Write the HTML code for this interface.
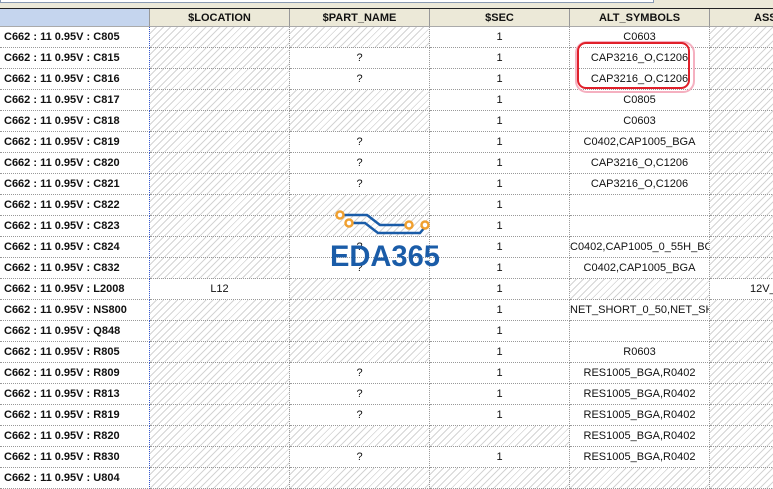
<!DOCTYPE html><html><head><style>
body{margin:0;width:773px;height:476px;overflow:hidden;background:#fff;font-family:"Liberation Sans",Arial,sans-serif;position:relative}
.top{position:absolute;left:0;top:0;width:773px;height:8px;background:#ece9d8;border-bottom:1px solid #222}
.top i{position:absolute;left:0;top:-1px;width:652px;height:3px;border:1px solid #8a9bb3;border-top:none;background:#fff}
.hd{position:absolute;top:9px;height:18px;background:#ece9d8;border-right:1px solid #999;border-bottom:1px solid #aaa;font:bold 11px "Liberation Sans",Arial,sans-serif;text-align:center;line-height:18px;box-sizing:border-box;color:#111}
.c{position:absolute;height:21px;box-sizing:border-box;border-right:1px dotted #999;border-bottom:1px dotted #999;font-size:11px;line-height:20px;text-align:center;color:#111;white-space:nowrap;overflow:hidden}
.f{font-weight:bold;text-align:left;padding-left:4px;border-right:1px dotted #3355cc}
.h{background:repeating-linear-gradient(135deg,#fff 0 4px,#d4d4d4 4px 5px)}
</style></head><body>
<div class="top"><i></i></div>
<div class="hd" style="left:0;width:150px;background:#c5d5ee"></div>
<div class="hd" style="left:150px;width:140px">$LOCATION</div>
<div class="hd" style="left:290px;width:140px">$PART_NAME</div>
<div class="hd" style="left:430px;width:140px">$SEC</div>
<div class="hd" style="left:570px;width:140px">ALT_SYMBOLS</div>
<div class="hd" style="left:710px;width:80px;text-align:left;padding-left:44px">ASS</div>
<div id="t"></div>
<svg style="position:absolute;left:330px;top:205px" width="115" height="65" viewBox="0 0 115 65">
<path d="M10 10 H37 L50 20 H80" stroke="#1a5ca8" stroke-width="2.5" fill="none"/>
<path d="M19 18 H35 L48 28 H90 L95 22" stroke="#1a5ca8" stroke-width="2.5" fill="none"/>
<circle cx="10" cy="10" r="3.5" fill="#fff" stroke="#f0a030" stroke-width="2.5"/>
<circle cx="19" cy="18" r="3.5" fill="#fff" stroke="#f0a030" stroke-width="2.5"/>
<circle cx="79" cy="20" r="3.5" fill="#fff" stroke="#f0a030" stroke-width="2.5"/>
<circle cx="95" cy="20" r="3.5" fill="#fff" stroke="#f0a030" stroke-width="2.5"/>
<text x="0" y="61" font-family="Liberation Sans,sans-serif" font-size="30" font-weight="bold" fill="#1a5ca8" textLength="110" lengthAdjust="spacingAndGlyphs">EDA365</text>
</svg>
<div style="position:absolute;left:575px;top:41px;width:120px;height:52px;border:2px solid #f5b0c0;border-radius:12px;box-sizing:border-box"></div>
<div style="position:absolute;left:577px;top:42px;width:113px;height:47px;border:2px solid #e0202a;border-radius:9px;box-sizing:border-box"></div>
<script>
var H='#';var rows=[
["C805",H,H,"1","C0603"],["C815",H,"?","1","CAP3216_O,C1206"],["C816",H,"?","1","CAP3216_O,C1206"],
["C817",H,H,"1","C0805"],["C818",H,H,"1","C0603"],["C819",H,"?","1","C0402,CAP1005_BGA"],
["C820",H,"?","1","CAP3216_O,C1206"],["C821",H,"?","1","CAP3216_O,C1206"],["C822",H,H,"1",""],["C823",H,H,"1",""],
["C824",H,"?","1","C0402,CAP1005_0_55H_BG"],["C832",H,"?","1","C0402,CAP1005_BGA"],["L2008","L12",H,"1",H,"12V_"],
["NS800",H,H,"1","NET_SHORT_0_50,NET_SH"],["Q848",H,H,"1",""],["R805",H,H,"1","R0603"],
["R809",H,"?","1","RES1005_BGA,R0402"],["R813",H,"?","1","RES1005_BGA,R0402"],["R819",H,"?","1","RES1005_BGA,R0402"],
["R820",H,H,H,"RES1005_BGA,R0402"],["R830",H,"?","1","RES1005_BGA,R0402"],["U804",H,H,H,H]];
var L=[0,150,290,430,570,710],W=[150,140,140,140,140,70],s='';
rows.forEach(function(r,i){var y=27+21*i;
s+='<div class="c f" style="left:0;top:'+y+'px;width:150px">C662 : 11 0.95V : '+r[0]+'</div>';
for(var j=1;j<6;j++){var v=j==5?(r[5]||H):r[j];var hh=v==H;
s+='<div class="c'+(hh?' h':'')+'" style="left:'+L[j]+'px;top:'+y+'px;width:'+W[j]+'px'+(j==5&&!hh?';text-align:left;padding-left:40px':'')+'">'+(hh?'':v)+'</div>';}});
document.getElementById('t').innerHTML=s;
</script>
</body></html>
